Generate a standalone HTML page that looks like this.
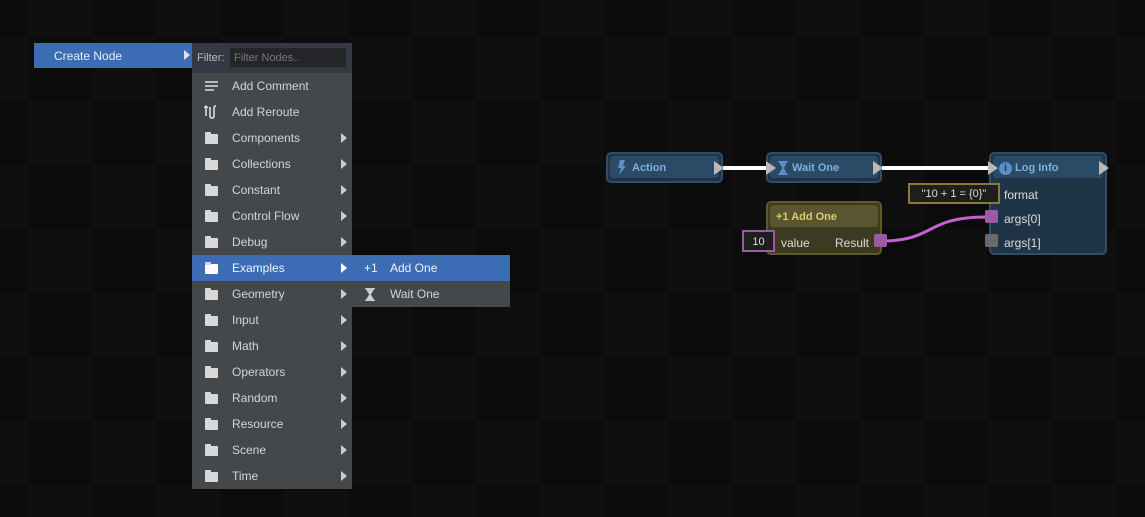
<!DOCTYPE html><html><head><style>
*{margin:0;padding:0;box-sizing:border-box}
body{width:1145px;height:517px;overflow:hidden;position:relative;font-family:"Liberation Sans",sans-serif;font-size:12px;
background-color:#0b0b0b;
background-image:linear-gradient(45deg,#0f0f0f 25%,transparent 25%,transparent 75%,#0f0f0f 75%),linear-gradient(45deg,#0f0f0f 25%,transparent 25%,transparent 75%,#0f0f0f 75%);
background-size:128px 128px;background-position:28px 38px,92px 102px}
.a{position:absolute}
.cn{left:34px;top:43px;width:158px;height:25px;background:#3c6cb3;color:#e8eef8;line-height:26px;padding-left:20px;font-size:12px}
.tri{position:absolute;width:0;height:0;border-left:6px solid #e0e0e0;border-top:5px solid transparent;border-bottom:5px solid transparent}
.sub{left:192px;top:43px;width:160px;height:446px;background:#45484a}
.flt{height:30px;background:#363843;color:#bbb;font-size:11px;line-height:31px;padding-left:5px;position:relative}
.flt span{position:absolute;left:38px;top:5px;width:116px;height:19px;background:#232528;color:#777;line-height:20px;padding-left:4px}
.it{height:26px;line-height:27px;color:#d4d4d4;position:relative;padding-left:40px}
.it.h{background:#3c6cb3;color:#f0f4fa}
.it .tri{left:149px;top:8px;border-left-color:#ccc}
.fo{position:absolute;left:13px;top:9px;width:13px;height:10px;background:#d8d8d8;border-radius:1px}
.fo:before{content:"";position:absolute;left:0;top:-2px;width:6px;height:3px;background:#d8d8d8;border-radius:1px 1px 0 0}
.m3{left:352px;top:255px;width:158px;height:52px;background:#45484a}
.node{position:absolute;background:#1f3446;border:2px solid #2f4d66;border-radius:5px}
.hd{position:absolute;left:2px;right:2px;top:2px;height:22px;background:#2a4a66;border-radius:3px;color:#7fb0de;font-weight:bold;font-size:11px;line-height:24px;padding-left:22px}
.pin{position:absolute;width:0;height:0;border-left:10px solid #b8b8b8;border-top:7px solid transparent;border-bottom:7px solid transparent}
.t{position:absolute;color:#ddd;font-size:12px}
</style></head><body>
<div class="a cn">Create Node<div class="tri" style="left:150px;top:7px"></div></div>
<div class="a sub">
<div class="flt">Filter:<span>Filter Nodes..</span></div>
<div class="it"><svg class="a" style="left:13px;top:8px" width="14" height="10"><path d="M0 1H13M0 5H13M0 9H9" stroke="#ddd" stroke-width="1.6"/></svg>Add Comment</div>
<div class="it"><svg class="a" style="left:12px;top:6px" width="14" height="14"><path d="M2 1V11M6 2V11Q6 13 8 13Q10 13 10 11V3Q10 1 12 1" stroke="#ddd" stroke-width="1.6" fill="none"/><path d="M0 3L2 1L4 3" stroke="#ddd" stroke-width="1.4" fill="none"/></svg>Add Reroute</div>
<div class="it"><i class="fo"></i>Components<i class="tri"></i></div>
<div class="it"><i class="fo"></i>Collections<i class="tri"></i></div>
<div class="it"><i class="fo"></i>Constant<i class="tri"></i></div>
<div class="it"><i class="fo"></i>Control Flow<i class="tri"></i></div>
<div class="it"><i class="fo"></i>Debug<i class="tri"></i></div>
<div class="it h"><i class="fo" style="background:#fff"></i>Examples<i class="tri" style="border-left-color:#fff"></i></div>
<div class="it"><i class="fo"></i>Geometry<i class="tri"></i></div>
<div class="it"><i class="fo"></i>Input<i class="tri"></i></div>
<div class="it"><i class="fo"></i>Math<i class="tri"></i></div>
<div class="it"><i class="fo"></i>Operators<i class="tri"></i></div>
<div class="it"><i class="fo"></i>Random<i class="tri"></i></div>
<div class="it"><i class="fo"></i>Resource<i class="tri"></i></div>
<div class="it"><i class="fo"></i>Scene<i class="tri"></i></div>
<div class="it"><i class="fo"></i>Time<i class="tri"></i></div>
</div>
<div class="a m3">
<div class="it h" style="padding-left:38px;height:26px"><span class="a" style="left:12px;">+1</span>Add One</div>
<div class="it" style="padding-left:38px"><svg class="a" style="left:13px;top:7px" width="10" height="13"><path d="M0 .5H10M0 12.5H10M1.5 1L5 6.5L1.5 12H8.5L5 6.5L8.5 1Z" stroke="#ccc" stroke-width="1.3" fill="#ccc"/></svg>Wait One</div>
</div>

<svg class="a" style="left:0;top:0" width="1145" height="517">
<path d="M722 168H768M880 168H990" stroke="#fff" stroke-width="4"/>
<path d="M882 241C935 241 925 217 986 217" stroke="#c860d0" stroke-width="3" fill="none"/>
</svg>
<div class="node" style="left:606px;top:152px;width:117px;height:31px"><div class="hd">Action</div><svg class="a" style="left:9px;top:6px" width="9" height="15"><path d="M3 0H8L6 6H9L2 15L4 8H1Z" fill="#5a8fc8"/></svg></div>
<div class="pin" style="left:714px;top:161px"></div>
<div class="node" style="left:766px;top:152px;width:116px;height:31px"><div class="hd">Wait One</div><svg class="a" style="left:10px;top:7px" width="10" height="14"><path d="M0 .5H10M0 13.5H10M1.5 1L5 7L1.5 13H8.5L5 7L8.5 1Z" stroke="#5a8fc8" stroke-width="1.3" fill="#5a8fc8"/></svg></div>
<div class="pin" style="left:766px;top:161px"></div>
<div class="pin" style="left:873px;top:161px"></div>
<div class="node" style="left:989px;top:152px;width:118px;height:103px"><div class="hd">Log Info</div><span class="a" style="left:8px;top:8px;width:13px;height:13px;border-radius:7px;background:#5a8fc8;color:#1f3446;font-size:10px;font-weight:bold;text-align:center;line-height:13px">i</span></div>
<div class="pin" style="left:988px;top:161px"></div>
<div class="pin" style="left:1099px;top:161px"></div>
<div class="a" style="left:908px;top:183px;width:92px;height:21px;border:2px solid #8a7a3a;background:#1e1e1e;color:#ddd;text-align:center;line-height:19px;font-size:11px">"10 + 1 = {0}"</div>
<div class="t" style="left:1004px;top:188px">format</div>
<div class="a" style="left:985px;top:210px;width:13px;height:13px;background:#9c5aa6;border-radius:2px"></div>
<div class="t" style="left:1004px;top:212px">args[0]</div>
<div class="a" style="left:985px;top:234px;width:13px;height:13px;background:#6a6a6a;border-radius:2px"></div>
<div class="t" style="left:1004px;top:236px">args[1]</div>
<div class="a" style="left:766px;top:201px;width:116px;height:54px;background:#3c3a20;border:2px solid #5e5a2c;border-radius:5px">
<div class="a" style="left:2px;right:2px;top:2px;height:22px;background:#5a5530;border-radius:3px;color:#d6cf6a;font-weight:bold;font-size:11px;line-height:24px;padding-left:6px">+1 Add One</div></div>
<div class="a" style="left:742px;top:230px;width:33px;height:22px;border:2px solid #9c5aa6;background:#1e1e1e;color:#ddd;text-align:center;line-height:20px;font-size:11px">10</div>
<div class="t" style="left:781px;top:236px">value</div>
<div class="t" style="left:835px;top:236px">Result</div>
<div class="a" style="left:874px;top:234px;width:13px;height:13px;background:#9c5aa6;border-radius:2px"></div>
</body></html>
